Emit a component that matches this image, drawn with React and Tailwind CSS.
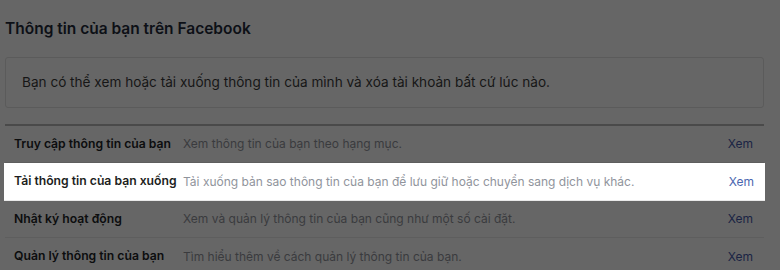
const rows = [
  { label: "Truy cập thông tin của bạn", desc: "Xem thông tin của bạn theo hạng mục." },
  { label: "Tải thông tin của bạn xuống", desc: "Tải xuống bản sao thông tin của bạn để lưu giữ hoặc chuyển sang dịch vụ khác.", active: true },
  { label: "Nhật ký hoạt động", desc: "Xem và quản lý thông tin của bạn cũng như một số cài đặt." },
  { label: "Quản lý thông tin của bạn", desc: "Tìm hiểu thêm về cách quản lý thông tin của bạn." },
];

export default function App() {
  return (
    <div
      className="w-[780px] h-[270px] overflow-hidden bg-[#666666] pl-[5px] pr-[16px]"
      style={{ fontFamily: 'Inter, "Liberation Sans", Arial, sans-serif' }}
    >
      <h1 className="pt-[18px] h-[57px] text-[15.5px] leading-[22px] font-semibold text-[#0d1016]">
        Thông tin của bạn trên Facebook
      </h1>

      <div className="h-[51px] flex items-center px-[16px] border border-[#5b5b5b] rounded-[3px] text-[13.6px] text-[#161616]">
        Bạn có thể xem hoặc tải xuống thông tin của mình và xóa tài khoản bất cứ lúc nào.
      </div>

      <div className="mt-[16px] border-t-2 border-[#4a4a4a]">
        {rows.map((r, i) => (
          <div
            key={i}
            className={
              r.active
                ? "h-[38px] -mx-[1px] px-[10px] flex items-center bg-white border-b border-[#e9e9e9] text-[12px]"
                : "h-[37px] px-[9px] flex items-center border-b border-[#5e5e5e] text-[12px] last:border-b-0"
            }
          >
            <div className={r.active ? "w-[169px] shrink-0 font-semibold text-[12.2px] text-[#1c1e21]" : "w-[169px] shrink-0 font-semibold text-[12.2px] text-[#0c0d0e]"}>
              {r.label}
            </div>
            <div className={r.active ? "flex-1 text-[#90949c]" : "flex-1 text-[#3a3b3e]"}>{r.desc}</div>
            <div className={r.active ? "pr-[1px] text-[#4b67b0]" : "pr-[2px] text-[#1a2444]"}>Xem</div>
          </div>
        ))}
      </div>
    </div>
  );
}
